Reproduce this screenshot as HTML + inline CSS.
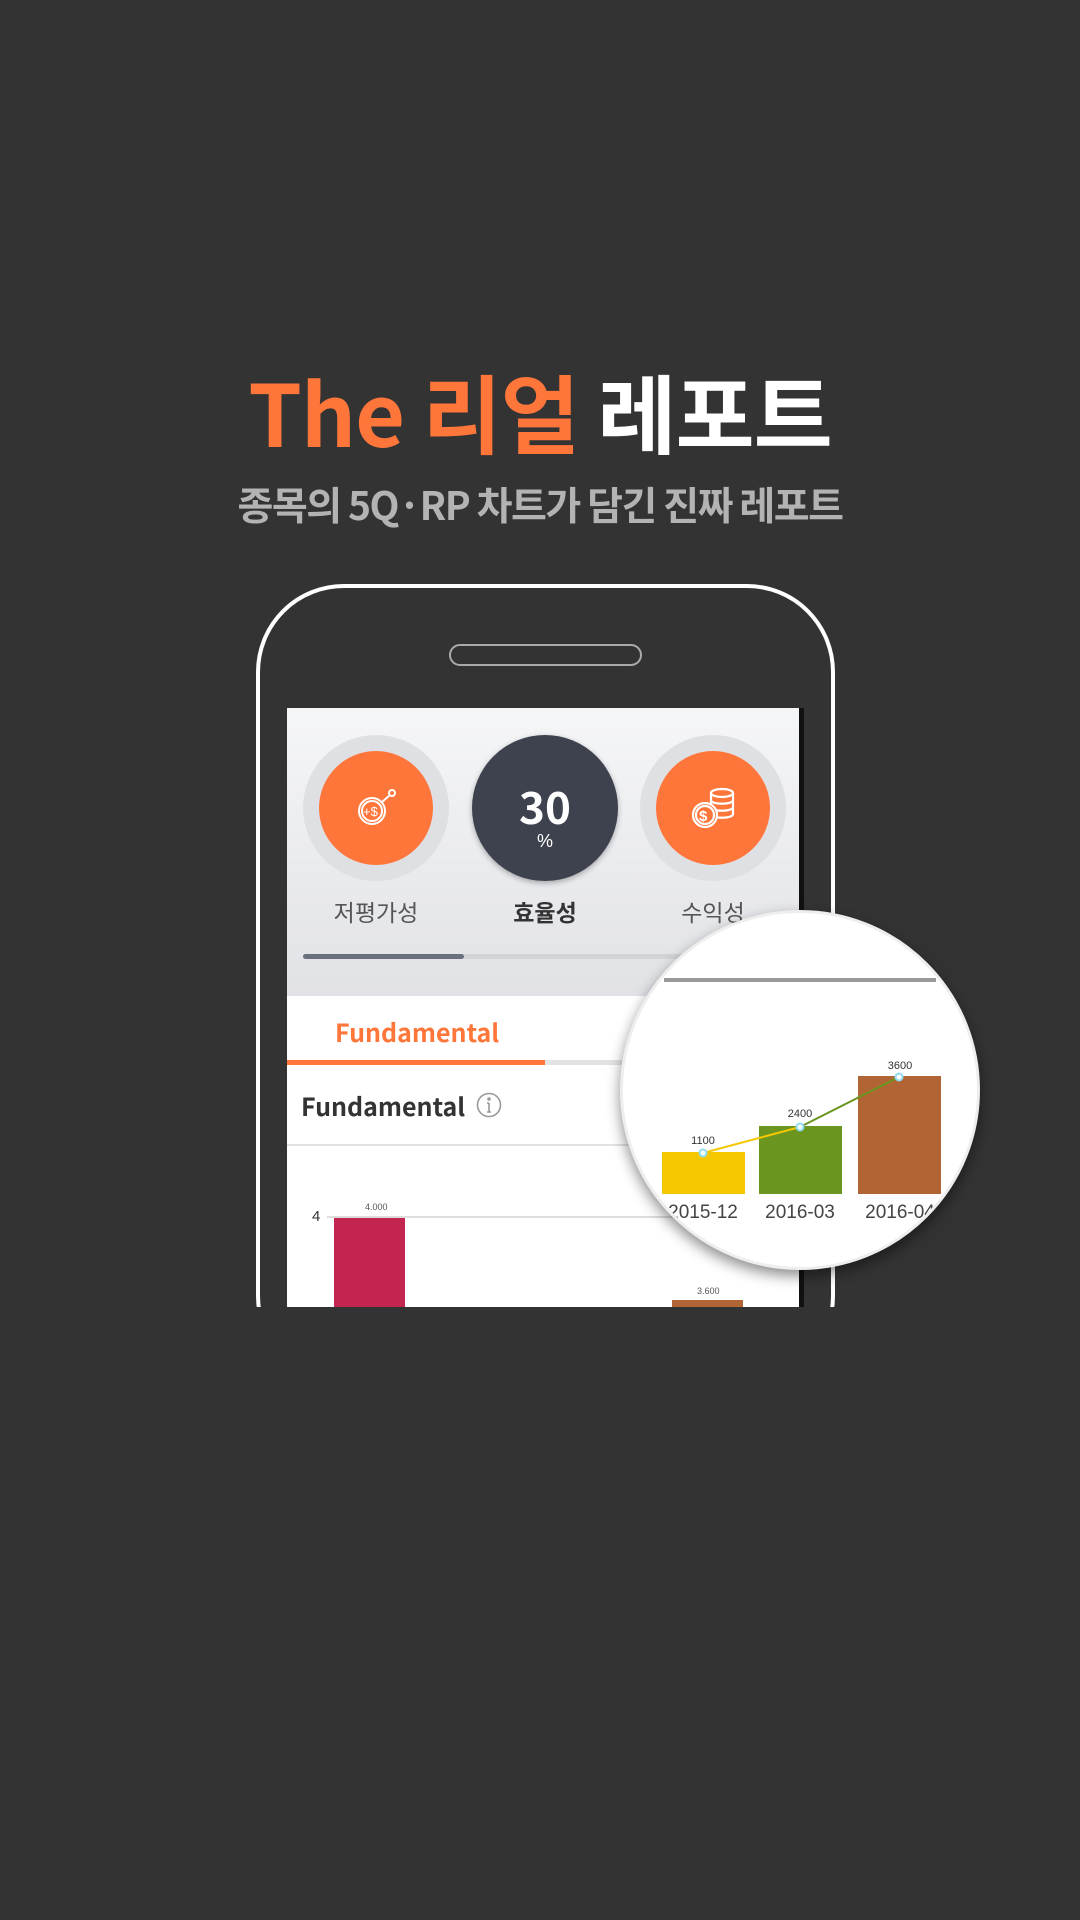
<!DOCTYPE html>
<html><head><meta charset="utf-8"><style>
*{margin:0;padding:0;box-sizing:border-box}
body{width:1080px;height:1920px;background:#333333;position:relative;overflow:hidden;font-family:"Liberation Sans","Noto Sans CJK KR",sans-serif}
.abs{position:absolute}
.t1{left:0;width:1080px;top:360px;text-align:center;font-family:"Noto Sans CJK KR",sans-serif;font-weight:700;font-size:86px;line-height:100px;color:#fff;letter-spacing:-1px}
.t1 span{color:#ff763b}
.t2{left:0;width:1080px;top:476px;text-align:center;font-family:"Noto Sans CJK KR",sans-serif;font-weight:700;font-size:39px;line-height:56px;color:#b3b3b3;letter-spacing:-1.5px}
.phone{left:256px;top:584px;width:579px;height:800px;border:4px solid #fff;border-radius:88px;}
.cut{left:0;top:1307px;width:1080px;height:613px;background:#333}
.pill{left:449px;top:644px;width:193px;height:22px;border:2px solid #aaa;border-radius:12px}
.screen{left:287px;top:708px;width:517px;height:599px;background:#fff;overflow:hidden;border-right:5px solid #111}
.top{left:0;top:0;width:517px;height:288px;background:linear-gradient(#f5f6f8,#e1e2e6)}
.ring{width:146px;height:146px;border-radius:50%;background:#dfe0e3;top:27px}
.inner{left:16px;top:16px;width:114px;height:114px;border-radius:50%;background:#ff763b}
.lbl{top:186px;width:146px;text-align:center;font-family:"Noto Sans CJK KR",sans-serif;font-size:23px;color:#555}
</style></head><body>
<div class="abs t1"><span>The 리얼</span> 레포트</div>
<div class="abs t2">종목의 5Q·RP 차트가 담긴 진짜 레포트</div>
<div class="abs phone"></div>
<div class="abs pill"></div>
<div class="abs screen">
  <div class="abs top">
    <div class="abs ring" style="left:16px"><div class="abs inner">
      <svg class="abs" style="left:33px;top:33px" width="48" height="48" viewBox="0 0 48 48" fill="none" stroke="#fff" stroke-width="2"><circle cx="20" cy="27" r="13"/><circle cx="20" cy="27" r="10"/><path d="M30 18 L38 11"/><circle cx="40" cy="9" r="3"/><text x="11" y="32" font-size="13" fill="#fff" stroke="none" font-family="Liberation Sans">+$</text></svg>
    </div></div>
    <div class="abs ring" style="left:185px;background:#3e424e;box-shadow:0 2px 6px rgba(0,0,0,.3)">
      <div class="abs" style="left:0;top:46px;width:146px;text-align:center;color:#fff;font-weight:700;font-size:44px;line-height:48px;font-family:'Noto Sans CJK KR',sans-serif">30</div>
      <div class="abs" style="left:0;top:96px;width:146px;text-align:center;color:#fff;font-size:18px">%</div>
    </div>
    <div class="abs ring" style="left:353px"><div class="abs inner">
      <svg class="abs" style="left:33px;top:33px" width="50" height="48" viewBox="0 0 50 48" fill="none" stroke="#fff" stroke-width="2.2"><ellipse cx="33" cy="9" rx="11" ry="4"/><path d="M22 9v22M44 9v22M22 16c0 5 22 5 22 0M22 23c0 5 22 5 22 0M22 30c0 5 22 5 22 0"/><circle cx="16" cy="31" r="12" fill="#ff763b"/><circle cx="16" cy="31" r="9"/><text x="10" y="37" font-size="15" fill="#fff" stroke="none" font-weight="bold" font-family="Liberation Sans">$</text></svg>
    </div></div>
    <div class="abs lbl" style="left:16px">저평가성</div>
    <div class="abs lbl" style="left:185px;font-weight:700;color:#333">효율성</div>
    <div class="abs lbl" style="left:353px">수익성</div>
    <div class="abs" style="left:16px;top:246px;width:450px;height:5px;background:#d3d4d7;border-radius:3px"></div>
    <div class="abs" style="left:16px;top:246px;width:161px;height:5px;background:#6a707c;border-radius:3px"></div>
  </div>
  <div class="abs" style="left:48px;top:306px;font-family:'Noto Sans CJK KR',sans-serif;font-weight:700;font-size:25px;color:#ff763b">Fundamental</div>
  <div class="abs" style="left:0;top:352px;width:517px;height:5px;background:#e3e3e3"></div>
  <div class="abs" style="left:0;top:352px;width:258px;height:5px;background:#ff763b"></div>
  <div class="abs" style="left:14px;top:380px;font-family:'Noto Sans CJK KR',sans-serif;font-weight:700;font-size:25px;color:#333">Fundamental</div>
  <svg class="abs" style="left:188px;top:383px" width="28" height="28" viewBox="0 0 28 28" fill="none" stroke="#999" stroke-width="1.6"><circle cx="14" cy="14" r="11.5"/><path d="M14 12v9M12 21h4M12 12h2"/><circle cx="14" cy="8" r="1" fill="#999"/></svg>
  <div class="abs" style="left:0;top:436px;width:517px;height:2px;background:#e2e2e2"></div>
  <div class="abs" style="left:25px;top:500px;font-size:15px;color:#333">4</div>
  <div class="abs" style="left:40px;top:508px;width:470px;height:2px;background:#ddd"></div>
  <div class="abs" style="left:47px;top:510px;width:71px;height:100px;background:#c2254f"></div>
  <div class="abs" style="left:78px;top:494px;font-size:9px;color:#555">4.000</div>
  <div class="abs" style="left:385px;top:592px;width:71px;height:20px;background:#b16534"></div>
  <div class="abs" style="left:410px;top:578px;font-size:9px;color:#555">3.600</div>
</div>
<div class="abs cut"></div>
<div class="abs" style="left:620px;top:910px;width:360px;height:360px;border-radius:50%;background:#fff;box-shadow:0 6px 14px rgba(0,0,0,.45);overflow:hidden;border:3px solid #eee">
  <div class="abs" style="left:41px;top:65px;width:272px;height:4px;background:#999"></div>
  <div class="abs" style="left:39px;top:239px;width:83px;height:42px;background:#f4c700"></div>
  <div class="abs" style="left:136px;top:213px;width:83px;height:68px;background:#6a961f"></div>
  <div class="abs" style="left:235px;top:163px;width:83px;height:118px;background:#b16534"></div>
  <svg class="abs" style="left:0;top:0" width="360" height="360"><path d="M80 240 L177 214" stroke="#f4c700" stroke-width="2"/><path d="M177 214 L276 164" stroke="#6a961f" stroke-width="2"/><g fill="#fff" stroke="#8fdcf5" stroke-width="2"><circle cx="80" cy="240" r="3.5"/><circle cx="177" cy="214" r="3.5"/><circle cx="276" cy="164" r="3.5"/></g>
  <g font-family="Liberation Sans" font-size="11" fill="#333" text-anchor="middle"><text x="80" y="231">1100</text><text x="177" y="204">2400</text><text x="277" y="156">3600</text></g>
  <g font-family="Liberation Sans" font-size="19" fill="#444" text-anchor="middle"><text x="80" y="305">2015-12</text><text x="177" y="305">2016-03</text><text x="277" y="305">2016-04</text></g></svg>
</div>
</body></html>
